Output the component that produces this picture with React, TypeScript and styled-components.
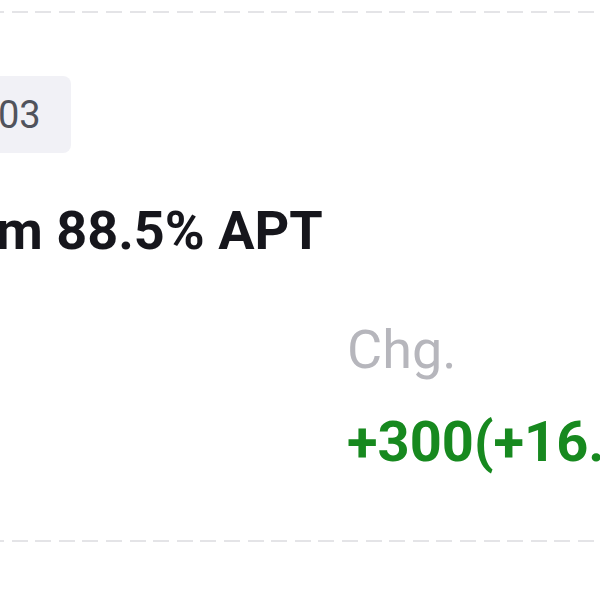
import styled, { createGlobalStyle } from "styled-components";

const GlobalStyle = createGlobalStyle`
  html, body {
    margin: 0;
    padding: 0;
    background: #ffffff;
  }
  body {
    font-family: Roboto, "Noto Sans", Arial, sans-serif;
    overflow: hidden;
  }
`;

const Page = styled.div`
  width: 600px;
  height: 600px;
  background: #ffffff;
  overflow: hidden;
`;

const Dashed = styled.div<{ $top: number }>`
  height: 2px;
  margin-top: ${(p) => p.$top}px;
  margin-left: -12px;
  background-image: repeating-linear-gradient(
    to right,
    #e4e4e7 0,
    #e4e4e7 16px,
    transparent 16px,
    transparent 23.6px
  );
`;

const Body = styled.div`
  display: flex;
  flex-direction: column;
`;

const Tag = styled.div`
  margin-top: 63px;
  width: 71px;
  height: 77px;
  display: flex;
  align-items: center;
  background: #f1f1f6;
  border-radius: 0 8px 8px 0;
  color: #50535c;
  font-size: 38px;
  overflow: hidden;
`;

const TagText = styled.span`
  margin-left: -2px;
`;

const Title = styled.h1`
  margin: 46px 0 0 -4px;
  font-size: 54px;
  line-height: 64px;
  font-weight: 700;
  color: #16161c;
  white-space: nowrap;
`;

const Stats = styled.div`
  display: grid;
  grid-template-columns: 347px 1fr;
  margin-top: 56px;
`;

const StatCol = styled.div`
  display: flex;
  flex-direction: column;
  white-space: nowrap;
`;

const Label = styled.div`
  font-size: 54px;
  line-height: 62px;
  color: #b6b6bc;
`;

const Value = styled.div<{ $up?: boolean }>`
  margin-top: 30px;
  font-size: 56px;
  line-height: 62px;
  font-weight: 700;
  color: ${(p) => (p.$up ? "#17891f" : "#16161c")};
`;

export default function App() {
  return (
    <Page>
      <GlobalStyle />
      <Dashed $top={11} />
      <Body>
        <Tag>
          <TagText>03</TagText>
        </Tag>
        <Title>m 88.5% APT</Title>
        <Stats>
          <StatCol />
          <StatCol>
            <Label>Chg.</Label>
            <Value $up>+300(+16.67%)</Value>
          </StatCol>
        </Stats>
      </Body>
      <Dashed $top={67} />
    </Page>
  );
}
